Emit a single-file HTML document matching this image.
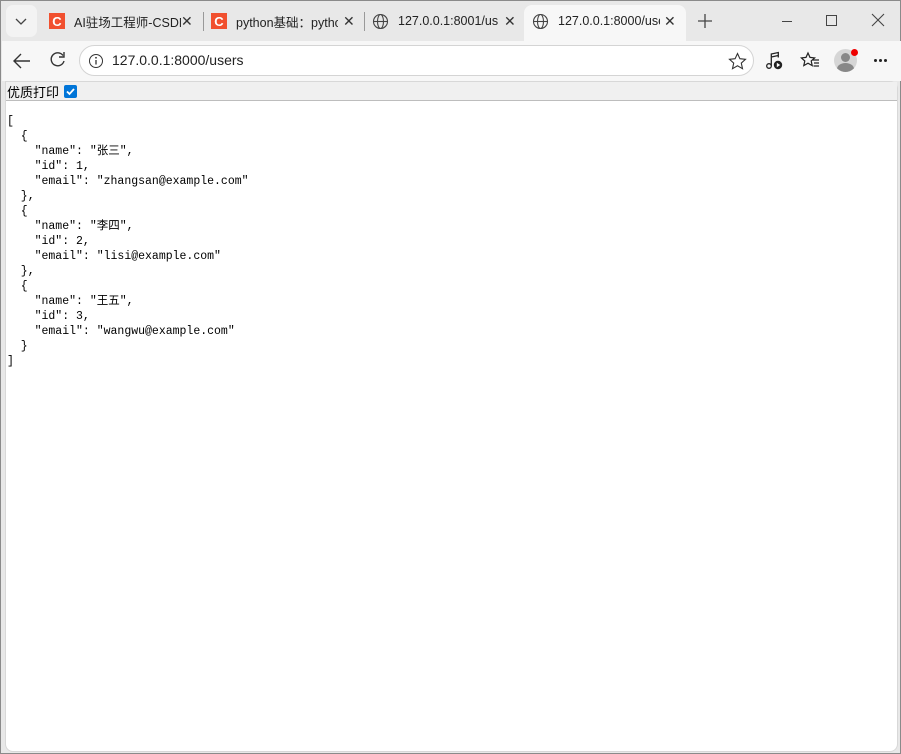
<!DOCTYPE html>
<html><head><meta charset="utf-8"><style>
*{margin:0;padding:0;box-sizing:border-box}
body{width:901px;height:754px;overflow:hidden;background:#2b2b2b;font-family:"Segoe UI","Liberation Sans","Noto Sans CJK SC",sans-serif;position:relative}
.win{position:absolute;left:0;top:0;width:901px;height:754px;background:#e8e8e8;border:1px solid #8a8a8a;}
.tab{position:absolute;top:3px;height:34px;font-size:12.5px;color:#222;display:flex;align-items:center}
.tab .t{white-space:nowrap;overflow:hidden;width:110px}
.x{position:absolute;font-size:14px;color:#333}
.sep{position:absolute;top:11px;width:1px;height:19px;background:#999}
.csdn{width:16px;height:16px;background:#f1502f;color:#fff;font:bold 13px "Liberation Sans";display:flex;align-items:center;justify-content:center;margin-right:9px}
.nav{position:absolute;left:1px;top:40px;width:899px;height:40px;background:#f7f7f7}
.addr{position:absolute;left:77px;top:4px;width:675px;height:31px;border:1px solid #d4d4d4;border-radius:16px;background:#fff}
.page{position:absolute;left:4px;top:80px;width:893px;height:671px;background:#fff;border:1px solid #d8d8d8;border-radius:0 8px 8px 8px}
.pbar{height:19px;background:#f0f0f0;border-bottom:1px solid #bdbdbd;font:13px "Liberation Sans","Noto Sans CJK SC",sans-serif;padding-left:1px;display:flex;align-items:center}
.cb{width:13px;height:13px;background:#0075d8;border-radius:2px;margin-left:5px;display:inline-flex;align-items:center;justify-content:center}
pre{font:11.5px/15px "Liberation Mono","Noto Sans CJK SC",monospace;color:#000;padding:13px 0 0 1px}
</style></head><body><div class="win">
<div style="position:absolute;left:5px;top:4px;width:31px;height:32px;background:#f3f3f3;border-radius:7px"><svg width="31" height="32"><path d="M10 14l5 5 5-5" stroke="#444" stroke-width="1.3" fill="none"/></svg></div>
<div class="tab" style="left:48px"><div class="csdn">C</div><div class="t" style="width:107px">AI驻场工程师-CSDN</div></div><div class="x" style="left:180px;top:12px">✕</div>
<div class="sep" style="left:202px"></div>
<div class="tab" style="left:210px"><div class="csdn">C</div><div class="t" style="width:102px">python基础：python</div></div><div class="x" style="left:342px;top:12px">✕</div>
<div class="sep" style="left:363px"></div>
<div class="tab" style="left:371px"><svg width="17" height="17" style="margin-right:9px"><g stroke="#444" fill="none" stroke-width="1.1"><circle cx="8.5" cy="8.5" r="7"/><ellipse cx="8.5" cy="8.5" rx="3" ry="7"/><path d="M1.5 8.5h14"/></g></svg><div class="t" style="width:100px">127.0.0.1:8001/users</div></div><div class="x" style="left:503px;top:12px">✕</div>
<div style="position:absolute;left:523px;top:4px;width:162px;height:37px;background:#f7f7f7;border-radius:8px 8px 0 0"></div>
<div class="tab" style="left:531px"><svg width="17" height="17" style="margin-right:9px"><g stroke="#444" fill="none" stroke-width="1.1"><circle cx="8.5" cy="8.5" r="7"/><ellipse cx="8.5" cy="8.5" rx="3" ry="7"/><path d="M1.5 8.5h14"/></g></svg><div class="t" style="width:102px">127.0.0.1:8000/users</div></div><div class="x" style="left:663px;top:12px">✕</div>
<svg style="position:absolute;left:696px;top:12px" width="16" height="16"><path d="M8 1v14M1 8h14" stroke="#444" stroke-width="1.3"/></svg>
<svg style="position:absolute;left:778px;top:13px" width="16" height="16"><path d="M3 7.5h10" stroke="#444"/></svg>
<svg style="position:absolute;left:824px;top:13px" width="14" height="14"><rect x="1.5" y="1.5" width="10" height="10" fill="none" stroke="#444"/></svg>
<svg style="position:absolute;left:870px;top:12px" width="14" height="14"><path d="M1 1l12 12M13 1L1 13" stroke="#444" stroke-width="1.1"/></svg>
<div class="nav">
<svg style="position:absolute;left:10px;top:11px" width="20" height="18"><path d="M18 9H2M9 2L2 9l7 7" stroke="#333" stroke-width="1.4" fill="none"/></svg>
<svg style="position:absolute;left:47px;top:10px" width="18" height="18"><path d="M14 4.5A6.5 6.5 0 1 0 15 10" stroke="#333" stroke-width="1.4" fill="none"/><path d="M15 1v5h-5" stroke="#333" stroke-width="1.4" fill="none"/></svg>
<div class="addr"><svg style="position:absolute;left:8px;top:7px" width="16" height="16"><circle cx="8" cy="8" r="6.5" stroke="#333" fill="none"/><path d="M8 7v4.5" stroke="#333" stroke-width="1.3"/><circle cx="8" cy="4.8" r=".9" fill="#333"/></svg><span style="position:absolute;left:32px;top:6px;font-size:14px;color:#222">127.0.0.1:8000/users</span>
<svg style="position:absolute;left:648px;top:6px" width="19" height="19"><path d="M9.5 1.5l2.4 5.2 5.6.6-4.2 3.8 1.2 5.6-5-2.9-5 2.9 1.2-5.6L1.5 7.3l5.6-.6z" fill="none" stroke="#333" stroke-width="1.1"/></svg></div>
<svg style="position:absolute;left:763px;top:10px" width="20" height="20"><g stroke="#222" fill="none" stroke-width="1.3"><circle cx="4" cy="15" r="2.3"/><path d="M6.3 15V3l7-1.5v5M6.3 6l7-1.5"/></g><circle cx="13" cy="14" r="4.2" fill="#222"/><path d="M11.8 11.8v4.4l3.4-2.2z" fill="#fff"/></svg>
<svg style="position:absolute;left:798px;top:10px" width="20" height="20"><path d="M8 2l2 4.4 4.6.5-3.4 3.1 1 4.6L8 12.2l-4.2 2.4 1-4.6L1.4 6.9 6 6.4z" fill="none" stroke="#222" stroke-width="1.2"/><path d="M13 9h6M14 12h5M13.5 15h5.5" stroke="#222" stroke-width="1.2"/></svg>
<div style="position:absolute;left:832px;top:8px;width:23px;height:23px;border-radius:50%;background:#d6d6d6;overflow:hidden"><div style="position:absolute;left:7px;top:4px;width:9px;height:9px;border-radius:50%;background:#888"></div><div style="position:absolute;left:3px;top:14px;width:17px;height:12px;border-radius:50%;background:#888"></div></div>
<div style="position:absolute;left:849px;top:8px;width:7px;height:7px;border-radius:50%;background:#e00"></div>
<div style="position:absolute;left:872px;top:18px;font-size:0"><span style="display:inline-block;width:3px;height:3px;background:#222;border-radius:50%;margin-right:2px"></span><span style="display:inline-block;width:3px;height:3px;background:#222;border-radius:50%;margin-right:2px"></span><span style="display:inline-block;width:3px;height:3px;background:#222;border-radius:50%"></span></div>
</div>
<div class="page"><div class="pbar">优质打印<span class="cb"><svg width="11" height="11"><path d="M2 5.5l2.5 2.5L9 3" stroke="#fff" stroke-width="1.8" fill="none"/></svg></span></div>
<pre>[
  {
    "name": "张三",
    "id": 1,
    "email": "zhangsan@example.com"
  },
  {
    "name": "李四",
    "id": 2,
    "email": "lisi@example.com"
  },
  {
    "name": "王五",
    "id": 3,
    "email": "wangwu@example.com"
  }
]</pre></div>
</div></body></html>
